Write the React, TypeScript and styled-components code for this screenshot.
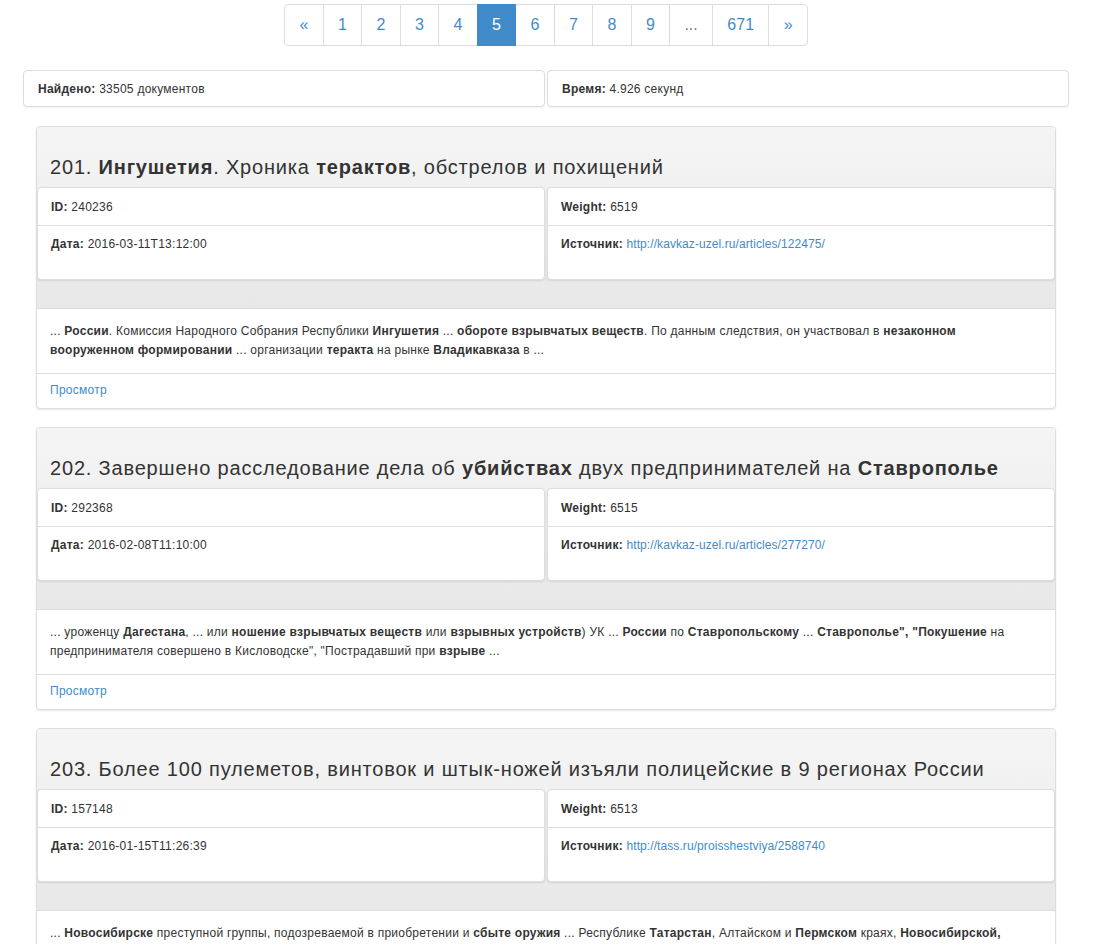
import React from "react";
import styled, { createGlobalStyle, css } from "styled-components";

const GlobalStyle = createGlobalStyle`
  html, body { margin: 0; padding: 0; background: #fff; }
  body {
    font-family: "Liberation Sans", Arial, Helvetica, sans-serif;
    font-size: 12px;
    line-height: 17px;
    letter-spacing: 0.25px;
    color: #333;
  }
  * { box-sizing: border-box; }
`;

const Container = styled.div`
  width: 1046px;
  margin-left: 23px;
`;

const PagerWrap = styled.nav`
  display: flex;
  justify-content: center;
  padding-top: 4px;
`;

const PagerList = styled.ul`
  display: flex;
  list-style: none;
  margin: 0;
  padding: 0;
`;

const PageItem = styled.li<{ $active?: boolean; $muted?: boolean }>`
  margin-left: -1px;
  padding: 10px 14.3px;
  font-size: 16px;
  line-height: 20px;
  letter-spacing: 0;
  border: 1px solid #ddd;
  background: #fff;
  color: #428bca;
  position: relative;
  &:first-child { margin-left: 0; border-radius: 4px 0 0 4px; }
  &:last-child { border-radius: 0 4px 4px 0; }
  ${(p) =>
    p.$active &&
    css`
      background: #428bca;
      border-color: #428bca;
      color: #fff;
      z-index: 2;
    `}
  ${(p) =>
    p.$muted &&
    css`
      color: #777;
    `}
`;

const StatsRow = styled.div`
  display: grid;
  grid-template-columns: 1fr 1fr;
  gap: 2px;
  margin-top: 24px;
`;

const StatPanel = styled.div`
  border: 1px solid #ddd;
  border-radius: 4px;
  background: #fff;
  box-shadow: 0 1px 2px rgba(0, 0, 0, 0.06);
  padding: 10px 14px 8px;
  line-height: 17px;
`;

const CardList = styled.div`
  display: flex;
  flex-direction: column;
  gap: 18px;
  padding: 0 13px;
  margin-top: 19px;
`;

const Card = styled.article`
  border: 1px solid #ddd;
  border-radius: 4px;
  background: #fff;
  box-shadow: 0 1px 2px rgba(0, 0, 0, 0.1);
  overflow: hidden;
`;

const CardHeading = styled.header`
  background: linear-gradient(to bottom, #f5f5f5 0%, #e8e8e8 100%);
  border-bottom: 1px solid #ddd;
  padding: 29px 0 28px;
`;

const Title = styled.h3`
  margin: 0 0 9px;
  padding: 0 13px;
  font-size: 20px;
  line-height: 22px;
  letter-spacing: 0.82px;
  font-weight: normal;
  color: #333;
  white-space: nowrap;
  b { font-weight: bold; }
`;

const InfoGrid = styled.div`
  display: grid;
  grid-template-columns: 1fr 1fr;
  gap: 2px;
`;

const InfoPanel = styled.div`
  border: 1px solid #ddd;
  border-radius: 4px;
  background: #fff;
  box-shadow: 0 1px 2px rgba(0, 0, 0, 0.1);
`;

const InfoRow = styled.div<{ $tall?: boolean }>`
  padding: ${(p) => (p.$tall ? "10px 13px" : "11px 13px 9px")};
  line-height: 17px;
  min-height: ${(p) => (p.$tall ? "54px" : "37px")};
  & + & { border-top: 1px solid #ddd; }
`;

const Link = styled.a`
  color: #428bca;
  text-decoration: none;
  letter-spacing: 0.08px;
`;

const CardBody = styled.div`
  padding: 13px;
  line-height: 19px;
  b { font-weight: bold; }
`;

const CardFooter = styled.footer`
  border-top: 1px solid #ddd;
  padding: 8px 13px 9px;
  line-height: 17px;
  a { letter-spacing: 0.25px; }
`;

type Doc = {
  n: number;
  title: React.ReactNode;
  id: string;
  weight: string;
  date: string;
  url: string;
  body: React.ReactNode;
};

const docs: Doc[] = [
  {
    n: 201,
    title: (
      <>
        201. <b>Ингушетия</b>. Хроника <b>терактов</b>, обстрелов и похищений
      </>
    ),
    id: "240236",
    weight: "6519",
    date: "2016-03-11T13:12:00",
    url: "http://kavkaz-uzel.ru/articles/122475/",
    body: (
      <>
        ... <b>России</b>. Комиссия Народного Собрания Республики <b>Ингушетия</b> ...{" "}
        <b>обороте взрывчатых веществ</b>. По данным следствия, он участвовал в{" "}
        <b>незаконном вооруженном формировании</b> ... организации <b>теракта</b> на рынке{" "}
        <b>Владикавказа</b> в ...
      </>
    ),
  },
  {
    n: 202,
    title: (
      <>
        202. Завершено расследование дела об <b>убийствах</b> двух предпринимателей на{" "}
        <b>Ставрополье</b>
      </>
    ),
    id: "292368",
    weight: "6515",
    date: "2016-02-08T11:10:00",
    url: "http://kavkaz-uzel.ru/articles/277270/",
    body: (
      <>
        ... уроженцу <b>Дагестана</b>, ... или <b>ношение взрывчатых веществ</b> или{" "}
        <b>взрывных устройств</b>) УК ... <b>России</b> по <b>Ставропольскому</b> ...{" "}
        <b>Ставрополье", "Покушение</b> на предпринимателя совершено в Кисловодске",
        "Пострадавший при <b>взрыве</b> ...
      </>
    ),
  },
  {
    n: 203,
    title: (
      <>203. Более 100 пулеметов, винтовок и штык-ножей изъяли полицейские в 9 регионах России</>
    ),
    id: "157148",
    weight: "6513",
    date: "2016-01-15T11:26:39",
    url: "http://tass.ru/proisshestviya/2588740",
    body: (
      <>
        ... <b>Новосибирске</b> преступной группы, подозреваемой в приобретении и{" "}
        <b>сбыте оружия</b> ... Республике <b>Татарстан</b>, Алтайском и <b>Пермском</b> краях,{" "}
        <b>Новосибирской,</b> Свердловской и Челябинской областях ... изъято <b>оружие</b> ...
      </>
    ),
  },
];

const pages: { label: string; active?: boolean; muted?: boolean }[] = [
  { label: "«" },
  { label: "1" },
  { label: "2" },
  { label: "3" },
  { label: "4" },
  { label: "5", active: true },
  { label: "6" },
  { label: "7" },
  { label: "8" },
  { label: "9" },
  { label: "...", muted: true },
  { label: "671" },
  { label: "»" },
];

export default function App() {
  return (
    <>
      <GlobalStyle />
      <Container>
        <PagerWrap>
          <PagerList>
            {pages.map((p) => (
              <PageItem key={p.label} $active={p.active} $muted={p.muted}>
                {p.label}
              </PageItem>
            ))}
          </PagerList>
        </PagerWrap>

        <StatsRow>
          <StatPanel>
            <b>Найдено:</b> 33505 документов
          </StatPanel>
          <StatPanel>
            <b>Время:</b> 4.926 секунд
          </StatPanel>
        </StatsRow>

        <CardList>
          {docs.map((d) => (
            <Card key={d.n}>
              <CardHeading>
                <Title>{d.title}</Title>
                <InfoGrid>
                  <InfoPanel>
                    <InfoRow>
                      <b>ID:</b> {d.id}
                    </InfoRow>
                    <InfoRow $tall>
                      <b>Дата:</b> {d.date}
                    </InfoRow>
                  </InfoPanel>
                  <InfoPanel>
                    <InfoRow>
                      <b>Weight:</b> {d.weight}
                    </InfoRow>
                    <InfoRow $tall>
                      <b>Источник:</b> <Link href={d.url}>{d.url}</Link>
                    </InfoRow>
                  </InfoPanel>
                </InfoGrid>
              </CardHeading>
              <CardBody>{d.body}</CardBody>
              <CardFooter>
                <Link href="#">Просмотр</Link>
              </CardFooter>
            </Card>
          ))}
        </CardList>
      </Container>
    </>
  );
}
